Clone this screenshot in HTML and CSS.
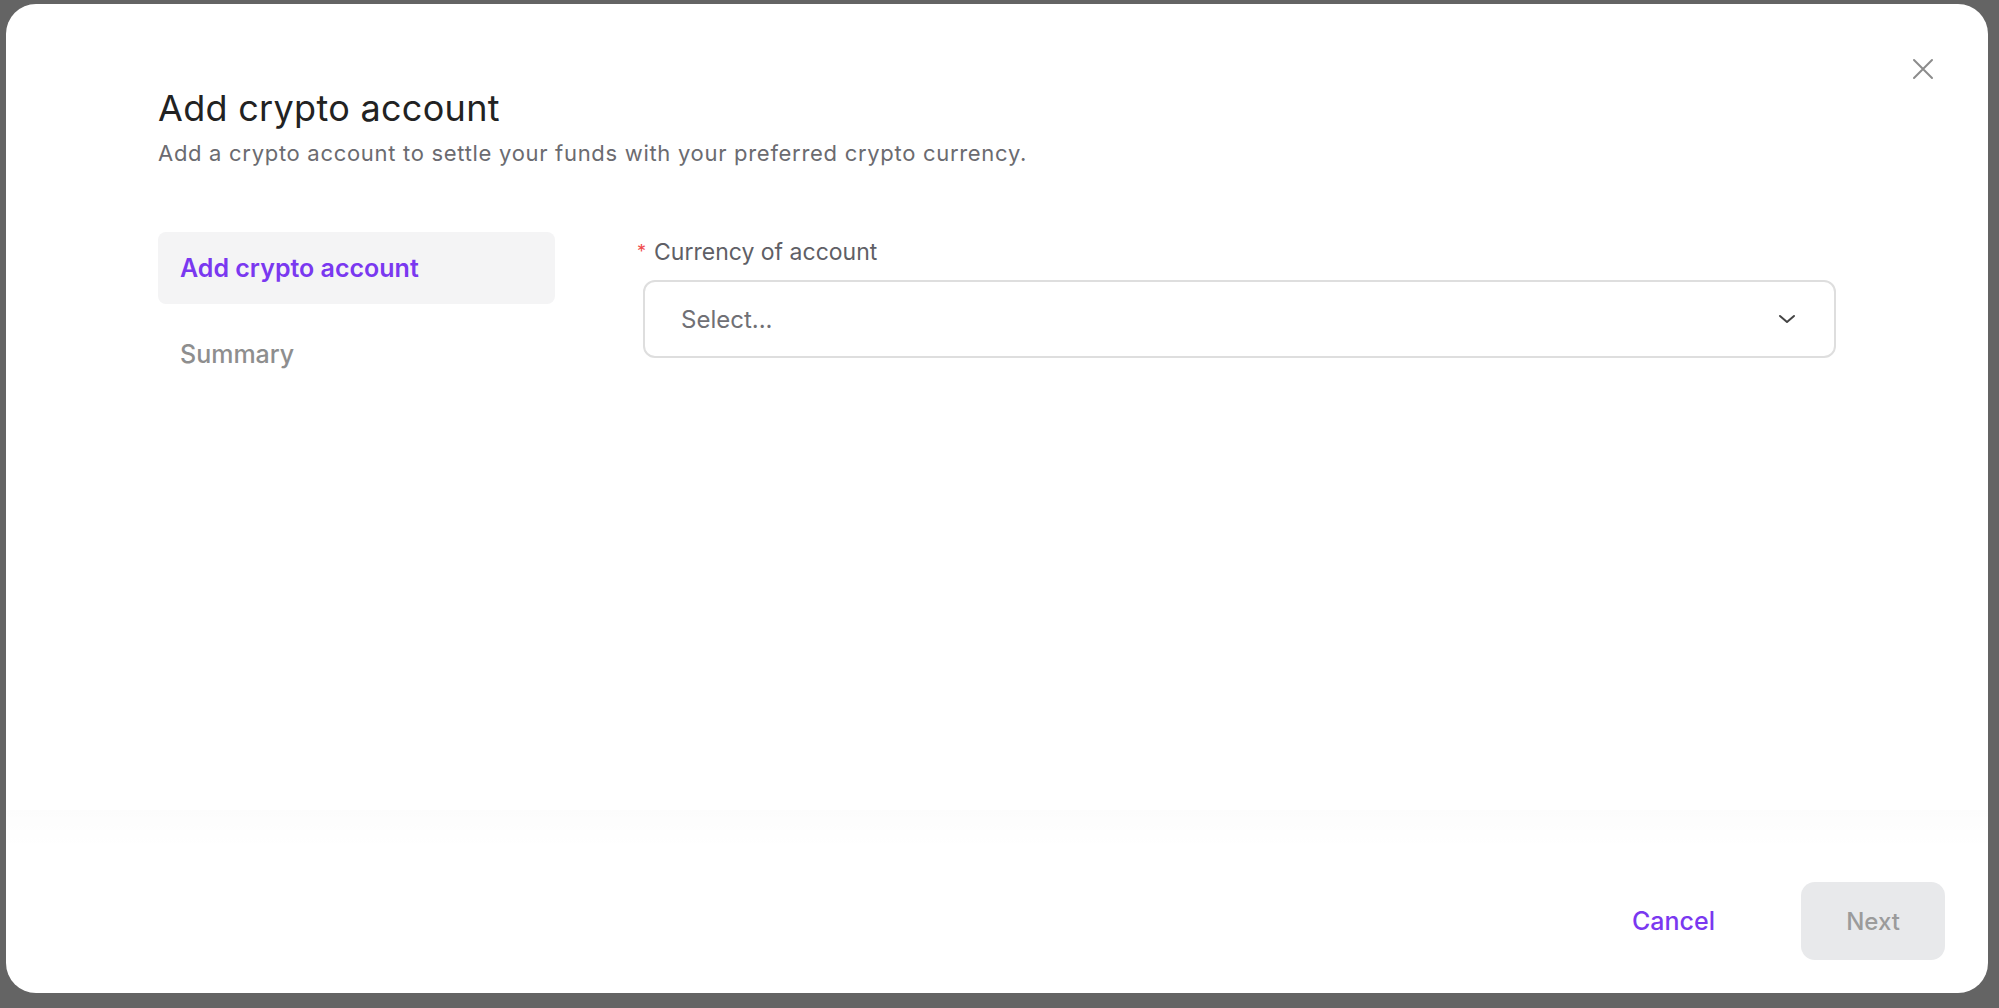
FILE: index.html
```html
<!DOCTYPE html>
<html lang="en">
<head>
  <meta charset="UTF-8">
  <title>Add crypto account</title>
  <link rel="stylesheet" href="styles.css">
</head>
<body>
  <div class="backdrop">
    <div class="modal">
      <button class="close-btn" aria-label="Close">
        <svg width="22" height="22" viewBox="0 0 22 22" fill="none" stroke="#8c8c8c" stroke-width="2" stroke-linecap="round">
          <path d="M2 2L20 20M20 2L2 20"/>
        </svg>
      </button>

      <div class="modal-header">
        <h2 class="modal-title">Add crypto account</h2>
        <p class="modal-subtitle">Add a crypto account to settle your funds with your preferred crypto currency.</p>
      </div>

      <div class="modal-body">
        <nav class="steps">
          <div class="step active">Add crypto account</div>
          <div class="step">Summary</div>
        </nav>

        <form class="form">
          <label class="field-label"><span class="req">*</span>Currency of account</label>
          <div class="select">
            <span class="placeholder">Select...</span>
            <svg width="18" height="10" viewBox="0 0 18 10" fill="none" stroke="#444" stroke-width="2" stroke-linecap="round" stroke-linejoin="round">
              <path d="M2 2L9 8L16 2"/>
            </svg>
          </div>
        </form>
      </div>

      <div class="modal-footer">
        <button class="btn-cancel">Cancel</button>
        <button class="btn-next" disabled>Next</button>
      </div>
    </div>
  </div>
</body>
</html>
```
FILE: styles.css
```css
* {
  box-sizing: border-box;
}

body {
  margin: 0;
  font-family: Inter, "Noto Sans", Arial, sans-serif;
  background-color: #646464;
  height: 1008px;
  overflow: hidden;
}

.backdrop {
  padding: 4px 11px 0 6px;
}

.modal {
  position: relative;
  background: white;
  border-radius: 30px;
  height: 989px;
  display: flex;
  flex-direction: column;
}

.close-btn {
  position: absolute;
  top: 51px;
  right: 51px;
  background: none;
  border: none;
  padding: 3px;
  cursor: pointer;
}

.modal-header {
  padding: 82px 152px 0 152px;
}

.modal-title {
  margin: 0;
  font-size: 36px;
  font-weight: 400;
  line-height: 44px;
  color: #222;
  letter-spacing: 0.3px;
}

.modal-subtitle {
  margin: 8px 0 0 0;
  font-size: 22px;
  line-height: 30px;
  color: #6b6b70;
  letter-spacing: 0.7px;
}

.modal-body {
  display: flex;
  gap: 88px;
  padding: 64px 152px 0 152px;
  flex: 1;
}

.steps {
  width: 397px;
  display: flex;
  flex-direction: column;
  gap: 14px;
}

.step {
  height: 72px;
  display: flex;
  align-items: center;
  padding-left: 22px;
  font-size: 25px;
  font-weight: 500;
  color: #8e8e8e;
  border-radius: 8px;
}

.step.active {
  background-color: #f4f4f5;
  color: #7a38f0;
  font-weight: 600;
}

.form {
  flex: 1;
  padding-top: 4px;
}

.field-label {
  display: flex;
  align-items: center;
  font-size: 23px;
  line-height: 32px;
  color: #5f5f66;
  margin-left: -6px;
}

.req {
  color: #f04b4b;
  font-size: 18px;
  margin-right: 8px;
}

.select {
  margin-top: 12px;
  height: 78px;
  border: 2px solid #dedede;
  border-radius: 12px;
  display: flex;
  align-items: center;
  justify-content: space-between;
  padding: 0 38px 0 36px;
}

.placeholder {
  font-size: 24px;
  color: #707075;
}

.modal-footer {
  display: flex;
  justify-content: flex-end;
  align-items: center;
  gap: 46px;
  padding: 72px 43px 33px 0;
  background: linear-gradient(to bottom, rgba(0,0,0,0.012) 0, rgba(0,0,0,0) 40px);
}

.btn-cancel {
  background: none;
  border: none;
  font-family: inherit;
  font-size: 25px;
  font-weight: 500;
  color: #7a38f0;
  padding: 10px 40px;
  cursor: pointer;
}

.btn-next {
  width: 144px;
  height: 78px;
  border: none;
  border-radius: 14px;
  background-color: #e8e9eb;
  color: #9b9b9b;
  font-family: inherit;
  font-size: 24px;
  font-weight: 500;
}
```
